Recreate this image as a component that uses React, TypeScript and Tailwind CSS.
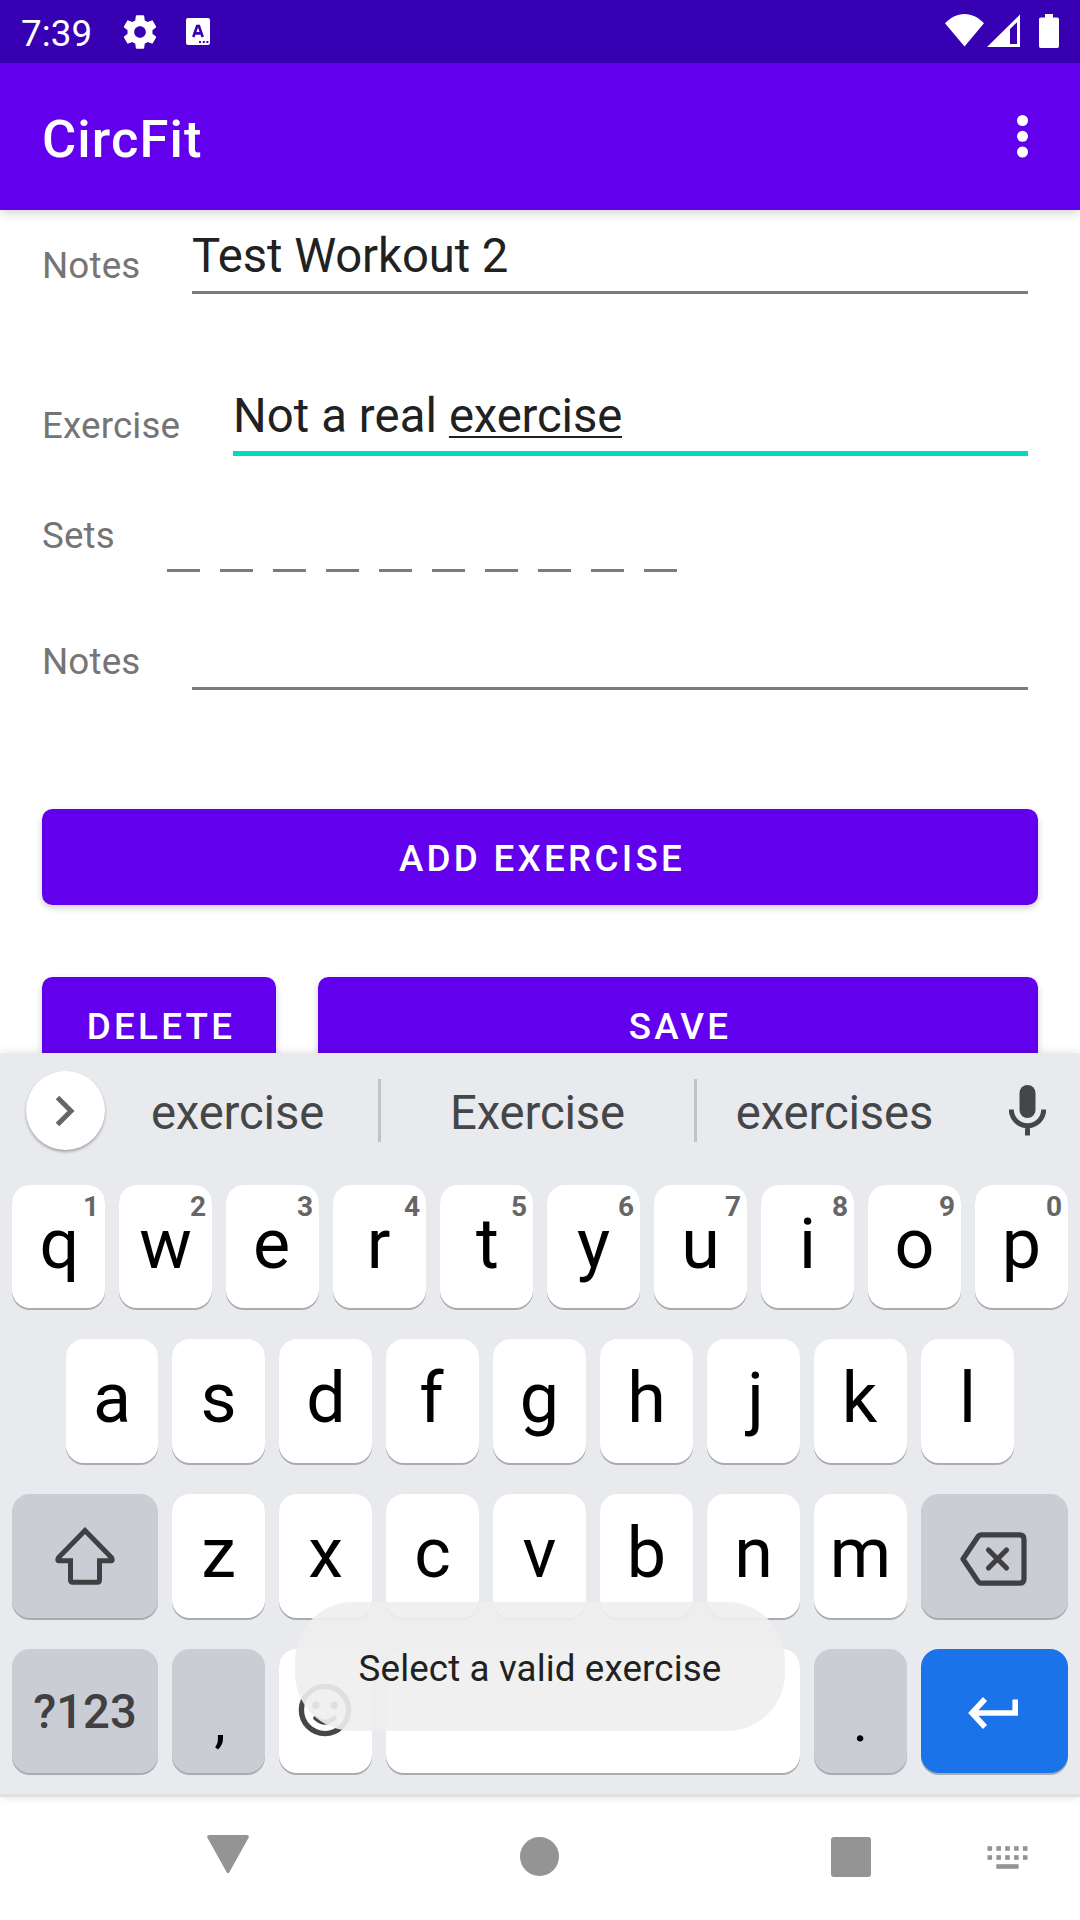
import type { ReactNode } from "react";

function StatusBar() {
  return (
    <header className="flex h-[63px] shrink-0 items-start bg-[#3700b3] text-white">
      <span className="ml-[21px] mt-[12px] text-[36.75px] leading-[44px] tracking-[0.1px]">7:39</span>
      <svg className="ml-[27.5px] mt-[12px] shrink-0" width="40" height="40" viewBox="0 0 24 24" fill="currentColor">
        <path d="M19.43 12.98c.04-.32.07-.64.07-.98s-.03-.66-.07-.98l2.11-1.65c.19-.15.24-.42.12-.64l-2-3.46c-.12-.22-.39-.3-.61-.22l-2.49 1c-.52-.4-1.08-.73-1.69-.98l-.38-2.65C14.46 2.18 14.25 2 14 2h-4c-.25 0-.46.18-.49.42l-.38 2.65c-.61.25-1.17.59-1.69.98l-2.49-1c-.23-.09-.49 0-.61.22l-2 3.46c-.13.22-.07.49.12.64l2.11 1.65c-.04.32-.07.65-.07.98s.03.66.07.98l-2.11 1.65c-.19.15-.24.42-.12.64l2 3.46c.12.22.39.3.61.22l2.49-1c.52.4 1.08.73 1.69.98l.38 2.65c.03.24.24.42.49.42h4c.25 0 .46-.18.49-.42l.38-2.65c.61-.25 1.17-.59 1.69-.98l2.49 1c.23.09.49 0 .61-.22l2-3.46c.12-.22.07-.49-.12-.64l-2.11-1.65zM12 15.5c-1.93 0-3.5-1.57-3.5-3.5s1.57-3.5 3.5-3.5 3.5 1.57 3.5 3.5-1.57 3.5-3.5 3.5z" />
      </svg>
      <svg className="ml-[26px] mt-[18px] shrink-0" width="24" height="27" viewBox="0 0 24 27">
        <rect width="24" height="27" rx="2" fill="#fff" />
        <path d="M7.3 19 L11.1 8 H12.9 L16.7 19 M8.8 15.4 H15.2" fill="none" stroke="#3700b3" strokeWidth="2.6" />
        <path d="M13 23h2v2h-2zM16.8 23h2v2h-2zM20.4 23h2v2h-2z" fill="#3700b3" />
      </svg>
      <svg className="ml-auto mt-[14px] shrink-0" width="39" height="33" viewBox="0 0 39 33" fill="currentColor">
        <path d="M19.5 32.5 L0 9.2 C5.5 3.6 12 0 19.5 0 S33.5 3.6 39 9.2 Z" />
      </svg>
      <svg className="ml-[3px] mt-[14px] shrink-0" width="33" height="33" viewBox="0 0 33 33">
        <path fillRule="evenodd" fill="#fff" d="M33 0.5 V33 H0 Z M30 8.3 L23 15 V30 H30 Z" />
      </svg>
      <svg className="ml-[19px] mr-[21px] mt-[14px] shrink-0" width="20" height="34" viewBox="0 0 20 34" fill="currentColor">
        <path d="M6 0h8v3.4h4.2A1.8 1.8 0 0 1 20 5.2v27a1.8 1.8 0 0 1-1.8 1.8H1.8A1.8 1.8 0 0 1 0 32.2v-27a1.8 1.8 0 0 1 1.8-1.8H6z" />
      </svg>
    </header>
  );
}

function AppBar() {
  return (
    <div className="relative z-10 flex h-[147px] shrink-0 items-center justify-between bg-[#6200ee] pl-[42px] pr-[52px] text-white shadow-[0_3px_10px_rgba(0,0,0,0.18)]">
      <h1 className="pt-[5px] text-[52.5px] font-medium leading-[62px] tracking-[1.1px]">CircFit</h1>
      <svg width="11" height="43" viewBox="0 0 11 43" fill="currentColor">
        <circle cx="5.5" cy="5.5" r="5.5" />
        <circle cx="5.5" cy="21.3" r="5.5" />
        <circle cx="5.5" cy="37" r="5.5" />
      </svg>
    </div>
  );
}

function Label({ children, className }: { children: ReactNode; className: string }) {
  return (
    <span className={`shrink-0 text-[36.75px] leading-[44px] tracking-[0.15px] text-[#757575] ${className}`}>
      {children}
    </span>
  );
}

function Form() {
  return (
    <main className="h-[843px] shrink-0 overflow-hidden px-[42px]">
      <div className="flex h-[84px] items-end pr-[10px]">
        <Label className="mb-[6px] w-[150px]">Notes</Label>
        <div className="flex-1 border-b-3 border-[#7b7b7b] pb-[7px] text-[47.25px] leading-[56px] tracking-[-0.08px] text-[#212121]">
          Test Workout 2
        </div>
      </div>
      <div className="mt-[78px] flex h-[84px] items-end pr-[10px]">
        <Label className="mb-[8px] w-[191px]">Exercise</Label>
        <div className="flex-1 border-b-5 border-[#03dac5] pb-[7px] text-[47.25px] leading-[56px] text-[#212121]">
          <span className="tracking-[0.1px]">Not a real </span>
          <span className="tracking-[-0.15px] underline decoration-[2px] underline-offset-[4px] [text-decoration-skip-ink:none]">
            exercise
          </span>
        </div>
      </div>
      <div className="mt-[56px] flex h-[60px] items-end">
        <Label className="mb-[14px] w-[125px]">Sets</Label>
        <div className="flex gap-[20px]">
          {Array.from({ length: 10 }, (_, i) => (
            <div key={i} className="h-[3px] w-[33px] bg-[#7b7b7b]" />
          ))}
        </div>
      </div>
      <div className="mt-[58px] flex h-[60px] items-end pr-[10px]">
        <Label className="mb-[6px] w-[150px]">Notes</Label>
        <div className="h-[3px] flex-1 bg-[#7b7b7b]" />
      </div>
      <ActionButton className="mt-[119px] w-full">ADD EXERCISE</ActionButton>
      <div className="mt-[72px] flex gap-[42px]">
        <ActionButton className="w-[234px]">DELETE</ActionButton>
        <ActionButton className="flex-1">SAVE</ActionButton>
      </div>
    </main>
  );
}

function ActionButton({ children, className }: { children: ReactNode; className: string }) {
  return (
    <button
      className={`flex h-[96px] items-center justify-center rounded-[10.5px] bg-[#6200ee] pl-[4px] pt-[4px] text-[36.75px] font-medium leading-[44px] tracking-[3.28px] text-white shadow-[0_3px_7px_rgba(0,0,0,0.2)] ${className}`}
    >
      {children}
    </button>
  );
}

function Suggestions() {
  return (
    <div className="flex h-[132px] items-start text-[47.25px] leading-[56px] tracking-[-0.15px] text-[#444647]">
      <button className="ml-[26px] mt-[18px] flex size-[79px] shrink-0 items-center justify-center rounded-full bg-white pr-[1px] shadow-[0_2px_3px_rgba(0,0,0,0.3)]">
        <svg width="20" height="32" viewBox="0 0 20 32" fill="none" stroke="#666" strokeWidth="5">
          <path d="M2.5 2.5 L16 16 L2.5 29.5" />
        </svg>
      </button>
      <span className="mt-[32px] w-[273px] pr-[8px] text-center">exercise</span>
      <i className="mt-[26px] h-[63px] w-[3px] bg-[#c1c3c6]" />
      <span className="mt-[32px] w-[313px] text-center">Exercise</span>
      <i className="mt-[26px] h-[63px] w-[3px] bg-[#c1c3c6]" />
      <span className="mt-[32px] w-[275px] text-center">exercises</span>
      <svg className="ml-[37px] mt-[32px]" width="37" height="51" viewBox="0 0 37 51">
        <rect x="10.5" y="0" width="16" height="33" rx="8" fill="#444647" />
        <path d="M2.3 24.5 A16.2 16.2 0 0 0 34.7 24.5 M18.5 40 V50.5" fill="none" stroke="#444647" strokeWidth="5" />
      </svg>
    </div>
  );
}

const KEY = "relative flex shrink-0 justify-center rounded-[18px] shadow-[0_2px_0_#a9abae]";

const NUDGE: Record<string, string> = {
  q: "pl-[2px]",
  e: "pr-[2px]",
  r: "pr-[2px]",
  t: "pl-[2px]",
  d: "pl-[1px]",
  f: "pr-[2px]",
  j: "pl-[4px]",
  k: "pr-[2px]",
};

function LetterKey({ letter, hint }: { letter: string; hint?: string }) {
  return (
    <button
      className={`${KEY} ${letter === "a" ? "w-[92px]" : "w-[93px]"} ${hint ? "h-[123px]" : "h-[124px]"} ${NUDGE[letter] ?? ""} bg-white pt-[17px] text-[70px] leading-[84px] text-black`}
    >
      {letter}
      {hint && (
        <span className="absolute right-[6px] top-[5px] text-[28px] font-bold leading-[34px] text-[#666]">{hint}</span>
      )}
    </button>
  );
}

function Keyboard() {
  return (
    <section className="relative flex h-[744px] shrink-0 flex-col border-b-3 border-[#dfe0e1] bg-[#e8eaed] shadow-[0_0_9px_rgba(0,0,0,0.12)]">
      <Suggestions />
      <div className="flex flex-col gap-[31px] px-[12px]">
        <div className="flex justify-between">
          {"qwertyuiop".split("").map((c, i) => (
            <LetterKey key={c} letter={c} hint={String((i + 1) % 10)} />
          ))}
        </div>
        <div className="flex justify-between px-[54px]">
          {"asdfghjkl".split("").map((c) => (
            <LetterKey key={c} letter={c} />
          ))}
        </div>
        <div className="flex justify-between">
          <button className={`${KEY} h-[124px] w-[146px] items-center bg-[#cbcdd5]`}>
            <svg width="60" height="58" viewBox="0 0 60 58" fill="none" stroke="#404042" strokeWidth="5" strokeLinejoin="round">
              <path d="M30 3.5 L3.6 30.5 Q1.7 33.8 4.5 33.8 H15.5 V53 Q15.5 55.3 17.8 55.3 H42.2 Q44.5 55.3 44.5 53 V33.8 H55.5 Q58.3 33.8 56.4 30.5 Z" strokeLinejoin="miter" />
            </svg>
          </button>
          {"zxcvbnm".split("").map((c) => (
            <LetterKey key={c} letter={c} />
          ))}
          <button className={`${KEY} h-[124px] w-[147px] items-center bg-[#cbcdd5] pr-[3px] pt-[6px]`}>
            <svg width="67" height="54" viewBox="0 0 67 54" fill="none" stroke="#404042" strokeWidth="5.2" strokeLinecap="round" strokeLinejoin="round">
              <path d="M21.5 2.8 H59.5 Q64 2.8 64 7.3 V46.7 Q64 51.2 59.5 51.2 H21.5 Q19.3 51.2 17.9 49.2 L3 27 L17.9 4.8 Q19.3 2.8 21.5 2.8 Z" />
              <path d="M28.5 18 L46.5 36 M46.5 18 L28.5 36" />
            </svg>
          </button>
        </div>
        <div className="flex justify-between">
          <button className={`${KEY} h-[124px] w-[146px] bg-[#cbcdd5] pt-[35px] text-[47.25px] font-medium leading-[56px] text-[#404042]`}>
            ?123
          </button>
          <button className={`${KEY} h-[124px] w-[93px] bg-[#cbcdd5] pl-[3px] pt-[30px] text-[58px] leading-[84px]`}>,</button>
          <button className={`${KEY} h-[124px] w-[93px] bg-white pr-[1px] pt-[34px]`}>
            <svg width="54" height="54" viewBox="0 0 54 54" fill="none" stroke="#444647">
              <circle cx="27" cy="27" r="23.6" strokeWidth="5.4" />
              <path d="M17.5 35 Q27 43.5 36.5 35" strokeWidth="4.6" strokeLinecap="round" />
              <circle cx="17.8" cy="22.3" r="3.7" fill="#444647" stroke="none" />
              <circle cx="36.2" cy="22.3" r="3.7" fill="#444647" stroke="none" />
            </svg>
          </button>
          <button aria-label="Space" className={`${KEY} h-[124px] w-[414px] bg-white`} />
          <button className={`${KEY} h-[124px] w-[93px] bg-[#cbcdd5] pt-[30px] text-[58px] leading-[84px]`}>.</button>
          <button className={`${KEY} h-[124px] w-[147px] bg-[#1a73e8] pr-[3px] pt-[48px]`}>
            <svg width="50" height="32" viewBox="0 0 50 32" fill="none" stroke="#fff" strokeWidth="5.6">
              <path d="M47.2 2.5 V16 H5 M17 2 L4 16 L17 30" />
            </svg>
          </button>
        </div>
      </div>
      <div className="absolute left-[295px] top-[549px] flex h-[129px] w-[490px] justify-center rounded-[58px] bg-[#eeeeee]/91 pt-[45px] text-[36.75px] leading-[44px] tracking-[0.12px] text-[#212121]">
        Select a valid exercise
      </div>
    </section>
  );
}

function NavigationBar() {
  return (
    <nav className="flex h-[123px] shrink-0 items-start bg-white text-[#949494]">
      <svg className="ml-[207px] mt-[38px]" width="42" height="39" viewBox="0 0 42 39" fill="currentColor">
        <path d="M2 0 H40 Q43 0.3 41.3 3.2 L22.5 37 Q21 39.4 19.5 37 L0.7 3.2 Q-1 0.3 2 0 Z" />
      </svg>
      <span className="ml-[271px] mt-[40px] size-[39px] rounded-full bg-current" />
      <span className="ml-[272px] mt-[40px] size-[40px] rounded-[3px] bg-current" />
      <svg className="ml-[116px] mt-[49px]" width="41" height="24" viewBox="0 0 41 24" fill="currentColor">
        {[0, 9].map((y) =>
          [0, 1, 2, 3, 4].map((i) => <rect key={`${i}-${y}`} x={0.5 + i * 8.85} y={y + 0.2} width="4.6" height="4.6" />),
        )}
        <rect x="9.3" y="18.2" width="22.3" height="4.6" />
      </svg>
    </nav>
  );
}

export default function App() {
  return (
    <div className="flex h-[1920px] w-[1080px] flex-col overflow-hidden bg-white font-[Roboto,'Liberation_Sans',sans-serif]">
      <StatusBar />
      <AppBar />
      <Form />
      <Keyboard />
      <NavigationBar />
    </div>
  );
}
